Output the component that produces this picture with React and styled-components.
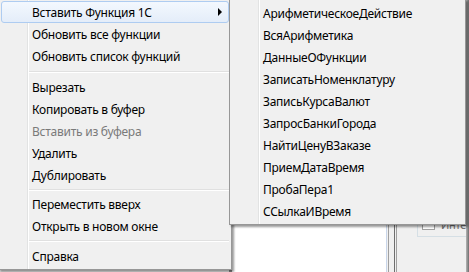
import React from "react";
import styled, { createGlobalStyle } from "styled-components";

const GlobalStyle = createGlobalStyle`
  html, body {
    margin: 0;
    padding: 0;
    background: #f0f0f0;
  }
  body {
    font-family: "Noto Sans", "Open Sans", Arial, sans-serif;
    font-size: 12px;
    letter-spacing: -0.25px;
    -webkit-font-smoothing: antialiased;
  }
`;

const mainItems = [
  { label: "Вставить Функция 1С", sub: true, active: true },
  { label: "Обновить все функции" },
  { label: "Обновить список функций" },
  { sep: true, size: 9 },
  { label: "Вырезать" },
  { label: "Копировать в буфер" },
  { label: "Вставить из буфера", disabled: true },
  { label: "Удалить" },
  { label: "Дублировать" },
  { sep: true, size: 7 },
  { label: "Переместить вверх" },
  { label: "Открыть в новом окне" },
  { sep: true, size: 8 },
  { label: "Справка" },
];

const functions = [
  "АрифметическоеДействие",
  "ВсяАрифметика",
  "ДанныеОФункции",
  "ЗаписатьНоменклатуру",
  "ЗаписьКурсаВалют",
  "ЗапросБанкиГорода",
  "НайтиЦенуВЗаказе",
  "ПриемДатаВремя",
  "ПробаПера1",
  "ССылкаИВремя",
];

export default function App() {
  return (
    <>
      <GlobalStyle />
      <Screen>
        {/* window behind the popup */}
        <BackLeft />
        <Frame />
        <ListPane />
        <Splitter>
          <SplitLine $c="#c9d6ea" />
          <SplitLine $c="#a0a0a0" />
          <SplitLine $c="#f0f0f0" />
          <SplitLine $c="#6e6e6e" />
          <SplitLine $c="#a0a0a0" />
        </Splitter>
        <RightPane>
          <GroupBox>
            <CheckBox />
            <GroupText>Инте</GroupText>
          </GroupBox>
        </RightPane>
        <RightEdge />

        <MainMenu>
          {mainItems.map((it, i) =>
            it.sep ? (
              <Separator key={i} $size={it.size} />
            ) : (
              <Item key={i} $active={it.active} $disabled={it.disabled}>
                {it.label}
                {it.sub && <Arrow />}
              </Item>
            )
          )}
        </MainMenu>

        <SubMenu>
          {functions.map((f) => (
            <Item key={f}>{f}</Item>
          ))}
        </SubMenu>
      </Screen>
    </>
  );
}

const Screen = styled.div`
  position: relative;
  width: 469px;
  height: 272px;
  overflow: hidden;
  display: flex;
  background: #f0f0f0;
`;

const BackLeft = styled.div`
  width: 233px;
  background: #f0f0f0;
`;

const Frame = styled.div`
  width: 3px;
  background: #8a8a8a;
`;

const ListPane = styled.div`
  width: 157px;
  background: #ffffff;
`;

const Splitter = styled.div`
  display: flex;
  width: 13px;
`;

const SplitLine = styled.div`
  width: ${(p) => (p.$c === "#f0f0f0" ? 3 : 1)}px;
  background: ${(p) => p.$c};
  margin-right: 1px;
`;

const RightPane = styled.div`
  flex: 1;
  padding: 205px 0 0 18px;
`;

const GroupBox = styled.div`
  height: 32px;
  border-left: 1px solid #d5dfe5;
  border-bottom: 1px solid #d5dfe5;
  display: flex;
  align-items: flex-end;
  gap: 6px;
  padding: 0 0 6px 4px;
  box-sizing: border-box;
`;

const CheckBox = styled.div`
  width: 11px;
  height: 9px;
  border: 1px solid #a0a0a0;
  background: #fff;
`;

const GroupText = styled.span`
  color: #6d6d6d;
  font-size: 11px;
  line-height: 11px;
`;

const RightEdge = styled.div`
  width: 3px;
  background: linear-gradient(to right, #b5b5b5, #6e6e6e);
`;

const Menu = styled.div`
  position: absolute;
  box-sizing: border-box;
  border: 1px solid #979797;
  padding: 2px;
  background: linear-gradient(
    to right,
    #f0f0f0 0 28px,
    #e2e3e3 28px 29px,
    #ffffff 29px 30px,
    #f0f0f0 30px
  );
  box-shadow: 2px 2px 2px rgba(0, 0, 0, 0.4);
  display: flex;
  flex-direction: column;
`;

const MainMenu = styled(Menu)`
  top: -2px;
  left: -2px;
  width: 234px;
`;

const SubMenu = styled(Menu)`
  top: -1px;
  left: 229px;
  width: 237px;
`;

const Item = styled.div`
  position: relative;
  height: 22px;
  box-sizing: border-box;
  display: flex;
  align-items: center;
  padding-left: 30px;
  border: 1px solid ${(p) => (p.$active ? "#aeccf1" : "transparent")};
  border-radius: 3px;
  background: ${(p) =>
    p.$active ? "linear-gradient(#f3f8fe, #e4edf9)" : "transparent"};
  color: ${(p) => (p.$disabled ? "#7a7a7a" : "#000000")};
  white-space: nowrap;
`;

const Arrow = styled.span`
  margin-left: auto;
  margin-right: 6px;
  width: 0;
  height: 0;
  border-left: 4px solid #000;
  border-top: 4px solid transparent;
  border-bottom: 4px solid transparent;
`;

const Separator = styled.div`
  height: ${(p) => p.$size}px;
  display: flex;
  align-items: center;
  padding-left: 28px;

  &::after {
    content: "";
    flex: 1;
    height: 1px;
    background: #e0e0e0;
    border-bottom: 1px solid #ffffff;
  }
`;
